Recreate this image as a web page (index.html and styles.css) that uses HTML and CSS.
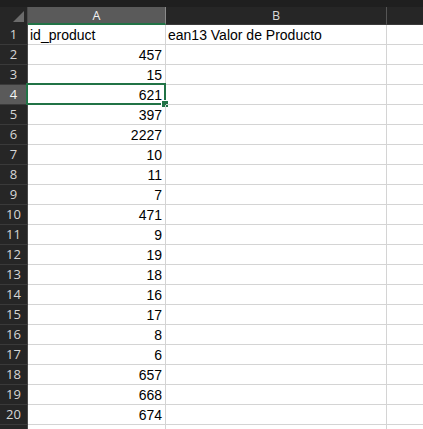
FILE: index.html
```html
<!DOCTYPE html>
<html>
<head>
<meta charset="utf-8">
<link rel="stylesheet" href="styles.css">
</head>
<body>
<div class="sheet">
  <div class="topstrip"></div>
  <div class="hdr-row">
    <div class="corner"><span class="tri"></span></div>
    <div class="colhdr sel colA">A</div>
    <div class="colhdr colB">B</div>
    <div class="colhdr colC"></div>
  </div>
  <div id="rows"></div>
</div>
<script src="script.js"></script>
</body>
</html>
```
FILE: styles.css
```css
html, body { margin: 0; padding: 0; background: #ffffff; overflow: hidden; }
.sheet { width: 423px; height: 429px; overflow: hidden; font-family: "Liberation Sans", Arial, sans-serif; }
.topstrip { height: 7px; background: #1f1f1f; }
.hdr-row { display: flex; height: 18px; background: #262626; }
.corner { width: 27px; border-right: 1px solid #4a4a4a; position: relative; background: #262626; }
.tri { position: absolute; right: 3px; bottom: 3px; width: 0; height: 0; border-left: 11px solid transparent; border-bottom: 11px solid #6b6b6b; }
.colhdr { box-sizing: border-box; color: #d9d9d9; font-family: "Open Sans", "DejaVu Sans", sans-serif; font-size: 12.5px; text-align: center; line-height: 18px; border-right: 1px solid #555; border-bottom: 1px solid #3a3a3a; }
.colhdr.sel { background: #5a5a5a; color: #f2f2f2; border-bottom: 2px solid #217346; border-right-color: #8a8a8a; }
.colA { width: 138px; }
.colB { width: 221px; }
.colC { flex: 1; border-right: none; }
.row { display: flex; height: 20px; }
.rnum { box-sizing: border-box; width: 28px; background: #262626; color: #d6d6d6; font-family: "Open Sans", "DejaVu Sans", sans-serif; font-size: 13px; text-align: center; line-height: 19px; border-right: 1px solid #4a4a4a; border-bottom: 1px solid #3a3a3a; }
.rnum.sel { background: #5a5a5a; color: #f5f5f5; border-right-color: #8a8a8a; }
.cell { box-sizing: border-box; border-right: 1px solid #d4d4d4; border-bottom: 1px solid #d4d4d4; font-size: 14px; color: #000; line-height: 20px; white-space: nowrap; overflow: visible; padding: 0 3px 0 2px; position: relative; }
.cell.num { text-align: right; }
.cell.a { width: 138px; }
.cell.b { width: 221px; }
.cell.c { flex: 1; border-right: none; }
.selbox { position: absolute; left: -2px; top: -2px; right: -1px; bottom: -1px; border: 2px solid #217346; pointer-events: none; }
.handle { position: absolute; right: -4px; bottom: -4px; width: 6px; height: 6px; background: #217346; border: 1px solid #fff; }
```
FILE: script.js
```js
var data = [["id_product","ean13 Valor de Producto"],[457],[15],[621],[397],[2227],[10],[11],[7],[471],[9],[19],[18],[16],[17],[8],[6],[657],[668],[674],[]];
var html = "";
for (var i = 0; i < data.length; i++) {
  var r = i + 1, d = data[i];
  var sel = (r === 4);
  html += '<div class="row"><div class="rnum' + (sel ? ' sel' : '') + '">' + (r <= 20 ? r : '') + '</div>';
  var a = d[0] === undefined ? "" : d[0];
  var isNum = typeof a === "number";
  html += '<div class="cell a' + (isNum ? ' num' : '') + '">' + a + (sel ? '<span class="selbox"></span><span class="handle"></span>' : '') + '</div>';
  html += '<div class="cell b">' + (d[1] || "") + '</div>';
  html += '<div class="cell c"></div></div>';
}
document.getElementById("rows").innerHTML = html;
```
